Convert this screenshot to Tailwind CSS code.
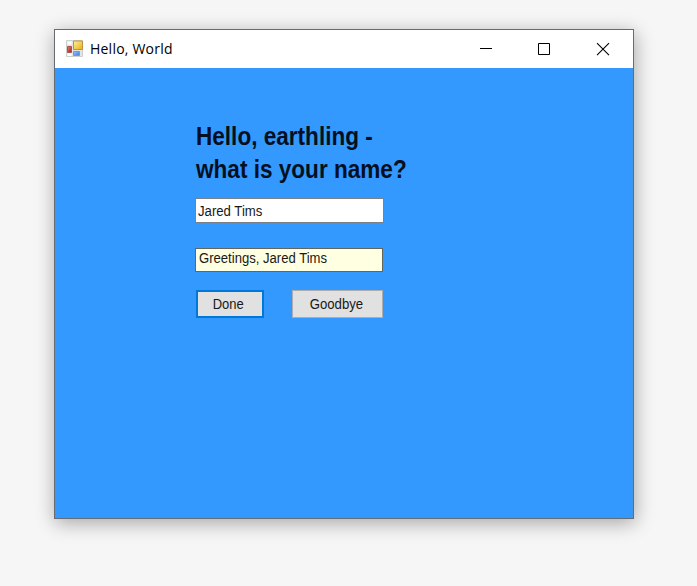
<!DOCTYPE html>
<html lang="en">
<head>
<meta charset="utf-8">
<title>Hello, World</title>
<script src="https://cdn.jsdelivr.net/npm/@tailwindcss/browser@4"></script>
</head>
<body class="h-screen overflow-hidden bg-[#f6f6f6] pl-[54px] pt-[29px] font-['Liberation_Sans',Arial,sans-serif]">
<main class="flex h-[490px] w-[580px] flex-col border border-[#666c74] bg-[#3399ff] shadow-[1px_4px_18px_rgba(0,0,0,0.33)]">
  <header class="flex h-[38px] shrink-0 items-center bg-white pl-[11px]">
    <svg class="size-[18px] shrink-0" viewBox="0 0 18 18">
      <defs>
        <linearGradient id="y" x2="1" y2="1"><stop stop-color="#fff0a0"/><stop offset="1" stop-color="#eab010"/></linearGradient>
        <linearGradient id="r" x2="1" y2="1"><stop stop-color="#e88070"/><stop offset="1" stop-color="#a81c18"/></linearGradient>
        <linearGradient id="b" x2="1" y2="1"><stop stop-color="#9cc8ff"/><stop offset="1" stop-color="#3c78d8"/></linearGradient>
      </defs>
      <path d="M.5 .5h16v16H.5z" fill="#e4e4e2" stroke="#cfcfcf"/>
      <path d="M1.500 1.500h4v3h-4zM1.500 13h4v3h-4z" fill="#fff"/>
      <path d="M7.500 1h9v8.500h-9z" fill="url(#y)" stroke="#b89444"/>
      <path d="M1.500 6.500h4v6h-4z" fill="url(#r)" stroke="#a8564c"/>
      <path d="M7.500 11.500h6v4h-6z" fill="url(#b)" stroke="#7898c8"/>
    </svg>
    <span class="ml-[6px] whitespace-nowrap font-['Open_Sans','Noto_Sans',sans-serif] text-[14px] leading-[20px] tracking-[0.22px] text-black">Hello, World</span>
    <div class="ml-auto flex text-black">
      <svg class="h-[38px] w-[58px]" viewBox="0 0 58 38" fill="none" stroke="currentColor"><path d="M22 18.500h12"/></svg>
      <svg class="h-[38px] w-[58px]" viewBox="0 0 58 38" fill="none" stroke="currentColor"><path d="M22.500 13.500h11v11h-11z"/></svg>
      <svg class="h-[38px] w-[59px]" viewBox="0 0 59 38" fill="none" stroke="currentColor" stroke-width="1.1"><path d="M23 13.200l12 12M35 13.200l-12 12"/></svg>
    </div>
  </header>
  <section class="flex flex-1 flex-col items-start border-x border-b border-[#4594e8] pl-[139px] pt-[52px]">
    <h1 class="ml-px origin-left scale-x-[0.868] whitespace-nowrap text-[26px] font-bold leading-[33px] text-[#04101f]">Hello, earthling -<br>what is your name?</h1>
    <div class="mt-[12px] h-[25px] w-[189px] border border-[#7b8187] bg-white pl-[2px]">
      <input class="block h-full w-[180px] origin-left scale-x-[0.94] text-[14px] text-[#181818] outline-none" value="Jared Tims">
    </div>
    <output class="mt-[25px] block h-[24px] w-[188px] border border-[#62665c] bg-[#ffffe1] pl-[3px] text-[14px] leading-[19px] text-[#181818]"><span class="inline-block origin-left scale-x-[0.935] whitespace-nowrap">Greetings, Jared Tims</span></output>
    <div class="mt-[18px] flex gap-[28px] pl-px text-[14px] text-[#181818]">
      <button class="h-[28px] w-[68px] border-2 border-[#0078d7] bg-[#e1e1e1]"><span class="inline-block -translate-x-[1.5px] scale-x-[0.93]">Done</span></button>
      <button class="h-[28px] w-[91px] border border-[#adadad] bg-[#e1e1e1]"><span class="inline-block -translate-x-px scale-x-[0.94]">Goodbye</span></button>
    </div>
  </section>
</main>
</body>
</html>
